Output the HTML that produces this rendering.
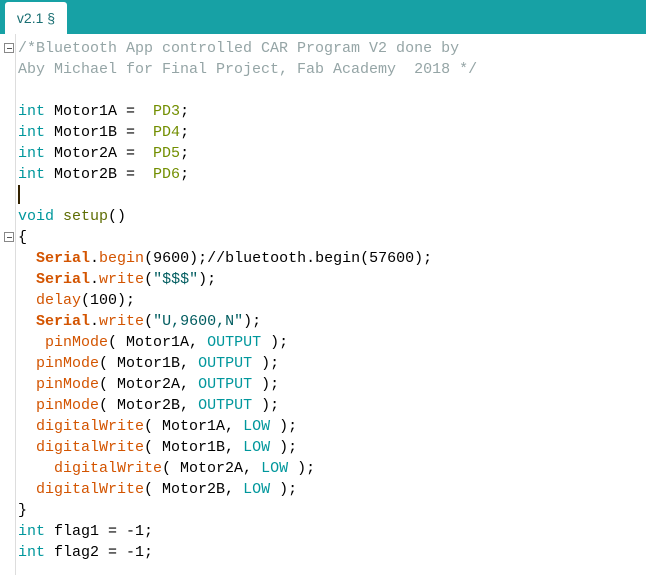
<!DOCTYPE html>
<html><head><style>
body{margin:0;width:646px;height:575px;background:#fff;overflow:hidden;position:relative;font-family:"Liberation Mono",monospace}
.bar{position:absolute;left:0;top:0;width:646px;height:34px;background:#17A1A5}
.tab{position:absolute;left:5px;top:2px;width:62px;height:32px;background:#fff;border-radius:3px 3px 0 0;font:14px "Liberation Sans",sans-serif;color:#1a6f73;text-align:center;line-height:32px}
.gut{position:absolute;left:15px;top:34px;width:1px;height:541px;background:#ddd}
pre{position:absolute;left:18px;top:38px;margin:0;font-size:15px;line-height:21px;color:#000;font-family:"Liberation Mono",monospace}
.c{color:#95A5A6}.k{color:#00979C}.p{color:#728E00}.o{color:#D35400;font-weight:bold}.f{color:#D35400}.s{color:#005C5F}.v{color:#5E6D03}
.box{position:absolute;left:4px;width:8px;height:8px;border:1px solid #888;background:#fff}
.box:after{content:"";position:absolute;left:2px;top:4px;width:5px;height:1px;background:#555}
.cur{position:absolute;left:18px;top:185px;width:2px;height:19px;background:#332200}
</style></head><body>
<div class="bar"></div><div class="tab">v2.1 §</div>
<div class="gut"></div>
<div class="box" style="top:43px"></div>
<div class="box" style="top:232px"></div>
<div class="cur"></div>
<pre><span class="c">/*Bluetooth App controlled CAR Program V2 done by
Aby Michael for Final Project, Fab Academy  2018 */</span>

<span class="k">int</span> Motor1A =  <span class="p">PD3</span>;
<span class="k">int</span> Motor1B =  <span class="p">PD4</span>;
<span class="k">int</span> Motor2A =  <span class="p">PD5</span>;
<span class="k">int</span> Motor2B =  <span class="p">PD6</span>;

<span class="k">void</span> <span class="v">setup</span>()
{
  <span class="o">Serial</span>.<span class="f">begin</span>(9600);//bluetooth.begin(57600);
  <span class="o">Serial</span>.<span class="f">write</span>(<span class="s">"$$$"</span>);
  <span class="f">delay</span>(100);
  <span class="o">Serial</span>.<span class="f">write</span>(<span class="s">"U,9600,N"</span>);
   <span class="f">pinMode</span>( Motor1A, <span class="k">OUTPUT</span> );
  <span class="f">pinMode</span>( Motor1B, <span class="k">OUTPUT</span> );
  <span class="f">pinMode</span>( Motor2A, <span class="k">OUTPUT</span> );
  <span class="f">pinMode</span>( Motor2B, <span class="k">OUTPUT</span> );
  <span class="f">digitalWrite</span>( Motor1A, <span class="k">LOW</span> );
  <span class="f">digitalWrite</span>( Motor1B, <span class="k">LOW</span> );
    <span class="f">digitalWrite</span>( Motor2A, <span class="k">LOW</span> );
  <span class="f">digitalWrite</span>( Motor2B, <span class="k">LOW</span> );
}
<span class="k">int</span> flag1 = -1;
<span class="k">int</span> flag2 = -1;</pre>
</body></html>
